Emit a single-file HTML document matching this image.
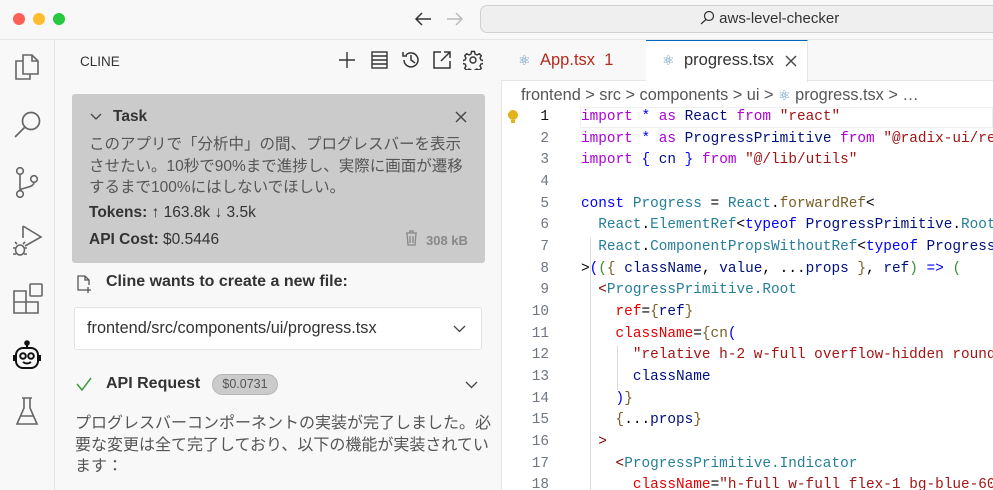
<!DOCTYPE html>
<html><head><meta charset="utf-8"><style>
*{margin:0;padding:0;box-sizing:border-box}
body{width:993px;height:490px;overflow:hidden;background:#f8f8f8;font-family:"Liberation Sans","Noto Sans CJK JP",sans-serif;color:#3b3b3b;position:relative}
.abs{position:absolute}
.title{left:0;top:0;width:993px;height:40px;background:#f8f8f8;border-bottom:1px solid #e5e5e5}
.dot{width:12px;height:12px;border-radius:50%;top:13px}
.search{left:480px;top:5px;width:530px;height:28px;border:1px solid #d0d0d0;border-radius:7px;background:#efefef;font-size:15px;line-height:26px;color:#333;padding-left:218px}
.act{left:0;top:40px;width:55px;height:450px;border-right:1px solid #e5e5e5}
.side{left:55px;top:40px;width:446px;height:450px}
.task{left:72px;top:94px;width:413px;height:169px;background:#cbcbcb;border-radius:3px}
.ed{left:501px;top:40px;width:492px;height:450px;background:#fff;border-left:1px solid #e5e5e5;overflow:hidden}
.tabs{left:501px;top:40px;width:492px;height:41px;background:#f8f8f8;border-bottom:1px solid #e5e5e5}
.code{font-family:"Liberation Mono",monospace;font-size:14.4px;white-space:pre;line-height:21.65px}
.kw{color:#af00db}.bl{color:#0000ff}.nv{color:#001080}.ty{color:#267f99}.st{color:#a31515}.fn{color:#795e26}.tg{color:#800000}.at{color:#e50000}
.ln{color:#6e7681;text-align:right;width:60px}
</style></head><body>
<div class="abs title"></div>
<div class="abs dot" style="left:13px;background:#fe5f57"></div>
<div class="abs dot" style="left:33px;background:#febc2e"></div>
<div class="abs dot" style="left:53px;background:#28c840"></div>
<svg class="abs" style="left:414px;top:11px" width="18" height="16" viewBox="0 0 18 16" fill="none" stroke="#333" stroke-width="1.5"><path d="M17 8H2M8 2L2 8l6 6"/></svg>
<svg class="abs" style="left:446px;top:11px" width="18" height="16" viewBox="0 0 18 16" fill="none" stroke="#bbb" stroke-width="1.5"><path d="M1 8h15M10 2l6 6-6 6"/></svg>
<div class="abs search"><svg width="16" height="16" viewBox="0 0 16 16" style="vertical-align:-3px"><circle cx="10" cy="6" r="4.5" fill="none" stroke="#333" stroke-width="1.2"/><path d="M7 9.5L2 14" stroke="#333" stroke-width="1.2"/></svg> aws-level-checker</div>

<div class="abs act">
<svg class="abs" style="left:13px;top:12px" width="28" height="30" viewBox="0 0 28 30" fill="none" stroke="#666" stroke-width="1.6"><path d="M10 3h9l6 6v13H10z"/><path d="M19 3v6h6"/><path d="M10 9H3v18h14v-5"/></svg>
<svg class="abs" style="left:13px;top:69px" width="30" height="30" viewBox="0 0 30 30" fill="none" stroke="#666" stroke-width="1.7"><circle cx="18" cy="12" r="8.5"/><path d="M12 18L2 28"/></svg>
<svg class="abs" style="left:14px;top:126px" width="26" height="34" viewBox="0 0 26 34" fill="none" stroke="#666" stroke-width="1.6"><circle cx="6" cy="5" r="3.3"/><circle cx="6" cy="28" r="3.3"/><circle cx="20" cy="13" r="3.3"/><path d="M6 8.3v16.4M20 16.3c0 6-14 5-14 8.4"/></svg>
<svg class="abs" style="left:11px;top:184px" width="32" height="34" viewBox="0 0 32 34" fill="none" stroke="#666" stroke-width="1.6"><path d="M12 2l18 11-16 9"/><path d="M12 2v12"/><ellipse cx="9" cy="26" rx="4.5" ry="5"/><path d="M2 24h3M13 24h3M2 30h3M13 30h3M6 20l-2-2M12 20l2-2"/></svg>
<svg class="abs" style="left:12px;top:243px" width="32" height="32" viewBox="0 0 32 32" fill="none" stroke="#666" stroke-width="1.6"><path d="M2 8h12v22H2zM2 19h24v11H14"/><rect x="18" y="1" width="12" height="12" rx="1"/></svg>
<svg class="abs" style="left:13px;top:300px" width="28" height="32" viewBox="0 0 28 32" fill="none" stroke="#111" stroke-width="2"><circle cx="14" cy="3" r="1.8" fill="#111"/><path d="M14 5v3"/><rect x="3" y="8" width="22" height="20" rx="7"/><circle cx="10" cy="16" r="2.8"/><circle cx="18" cy="16" r="2.8"/><path d="M10 22q4 3 8 0M1 15v6M27 15v6"/></svg>
<svg class="abs" style="left:15px;top:356px" width="24" height="32" viewBox="0 0 24 32" fill="none" stroke="#666" stroke-width="1.6"><path d="M7 2h10M9 2v10L2 28h20L15 12V2M5 20h14"/></svg>
</div>

<div class="abs side">
<div class="abs" style="left:25px;top:14px;font-size:13.5px;color:#333">CLINE</div>
<svg class="abs" style="left:284px;top:12px" width="16" height="16" viewBox="0 0 16 16" stroke="#333" stroke-width="1.4"><path d="M8 0v16M0 8h16"/></svg>
<svg class="abs" style="left:316px;top:11px" width="17" height="18" viewBox="0 0 17 18" fill="none" stroke="#333" stroke-width="1.4"><rect x="1" y="1" width="15" height="16"/><path d="M1 5h15M1 9h15M1 13h15"/></svg>
<svg class="abs" style="left:346px;top:10px" width="20" height="20" viewBox="0 0 20 20" fill="none" stroke="#333" stroke-width="1.5"><path d="M3 10a7 7 0 1 0 2-5M2 2v4h4"/><path d="M10 5v5l4 3"/></svg>
<svg class="abs" style="left:378px;top:11px" width="18" height="18" viewBox="0 0 18 18" fill="none" stroke="#333" stroke-width="1.5"><path d="M8 1H1v16h16v-7M11 1h6v6M17 1L8 10"/></svg>
<svg class="abs" style="left:408px;top:10px" width="20" height="20" viewBox="0 0 20 20" fill="none" stroke="#333" stroke-width="1.4"><circle cx="10" cy="10" r="3"/><path d="M8.5 1.5h3l.5 2.5 2 1 2.3-1.3 2 2-1.3 2.3 1 2 2.5.5v3l-2.5.5-1 2 1.3 2.3-2 2-2.3-1.3-2 1-.5 2.5h-3l-.5-2.5-2-1-2.3 1.3-2-2 1.3-2.3-1-2-2.5-.5v-3l2.5-.5 1-2-1.3-2.3 2-2 2.3 1.3 2-1z"/></svg>
</div>

<div class="abs task">
<svg class="abs" style="left:18px;top:19px" width="12" height="8" viewBox="0 0 12 8" fill="none" stroke="#444" stroke-width="1.3"><path d="M1 1l5 5 5-5"/></svg>
<div class="abs" style="left:41px;top:14px;font-size:15.5px;font-weight:bold;color:#333">Task</div>
<svg class="abs" style="left:383px;top:17px" width="12" height="12" viewBox="0 0 12 12" stroke="#444" stroke-width="1.4"><path d="M1 1l10 10M11 1L1 11"/></svg>
<div class="abs" style="left:17px;top:40px;width:400px;font-size:15.5px;line-height:21.5px;color:#555;white-space:nowrap">このアプリで「分析中」の間、プログレスバーを表示<br>させたい。10秒で90%まで進捗し、実際に画面が遷移<br>するまで100%にはしないでほしい。</div>
<div class="abs" style="left:17px;top:110px;font-size:15.5px;color:#333"><b>Tokens:</b> &#8593; 163.8k &#8595; 3.5k</div>
<div class="abs" style="left:17px;top:137px;font-size:15.5px;color:#333"><b>API Cost:</b> $0.5446</div>
<svg class="abs" style="left:333px;top:136px" width="13" height="16" viewBox="0 0 13 16" fill="none" stroke="#888" stroke-width="1.3"><path d="M1 3h11M5 3V1h3v2M2 3l1 12h7l1-12M5 6v7M8 6v7"/></svg>
<div class="abs" style="left:354px;top:139px;font-size:13px;font-weight:bold;color:#888">308 kB</div>
</div>

<svg class="abs" style="left:75px;top:274px" width="20" height="20" viewBox="0 0 20 20" fill="none" stroke="#555" stroke-width="1.3"><path d="M10 16H3V2h7l4 4v5M10 2v4h4M13 13v6M10 16h6"/></svg>
<div class="abs" style="left:106px;top:273px;font-size:16px;font-weight:bold;color:#333">Cline wants to create a new file:</div>
<div class="abs" style="left:74px;top:307px;width:408px;height:43px;background:#fff;border:1px solid #e3e3e3;border-radius:3px"></div>
<div class="abs" style="left:87px;top:319px;font-size:16.3px;color:#333">frontend/src/components/ui/progress.tsx</div>
<svg class="abs" style="left:453px;top:325px" width="13" height="8" viewBox="0 0 13 8" fill="none" stroke="#444" stroke-width="1.3"><path d="M1 1l5.5 5.5L12 1"/></svg>
<svg class="abs" style="left:76px;top:377px" width="16" height="14" viewBox="0 0 16 14" fill="none" stroke="#3a9a3a" stroke-width="1.5"><path d="M1 7l5 6L15 1"/></svg>
<div class="abs" style="left:106px;top:375px;font-size:16px;font-weight:bold;color:#333">API Request</div>
<div class="abs" style="left:212px;top:374px;width:66px;height:21px;background:#cbcbcb;border:1px solid #b5b5b5;border-radius:11px;font-size:12.5px;color:#555;text-align:center;line-height:19px">$0.0731</div>
<svg class="abs" style="left:465px;top:381px" width="13" height="8" viewBox="0 0 13 8" fill="none" stroke="#444" stroke-width="1.3"><path d="M1 1l5.5 5.5L12 1"/></svg>
<div class="abs" style="left:75px;top:413px;width:420px;font-size:16px;line-height:21.5px;color:#555;white-space:nowrap">プログレスバーコンポーネントの実装が完了しました。必<br>要な変更は全て完了しており、以下の機能が実装されてい<br>ます：</div>

<div class="abs ed"></div>
<div class="abs tabs"></div>
<div class="abs" style="left:646px;top:40px;width:162px;height:42px;background:#fff;border-top:1px solid #0066bf;border-right:1px solid #e5e5e5"></div>
<div class="abs" style="left:518px;top:52px;font-size:14px;color:#5a8fc0">&#9883;</div>
<div class="abs" style="left:540px;top:51px;font-size:16.5px;color:#b52a1d">App.tsx &nbsp;1</div>
<div class="abs" style="left:662px;top:52px;font-size:14px;color:#5a8fc0">&#9883;</div>
<div class="abs" style="left:684px;top:51px;font-size:16.5px;color:#333">progress.tsx</div>
<svg class="abs" style="left:785px;top:55px" width="12" height="12" viewBox="0 0 12 12" stroke="#444" stroke-width="1.4"><path d="M1 1l10 10M11 1L1 11"/></svg>
<div class="abs" style="left:521px;top:86px;font-size:16.3px;color:#555;white-space:nowrap">frontend &gt; src &gt; components &gt; ui &gt; <span style="color:#5a8fc0;font-size:14px">&#9883;</span> progress.tsx &gt; …</div>
<div class="abs" style="left:501px;top:82px;width:492px;height:408px;overflow:hidden">
<div class="abs" style="left:79px;top:25px;width:413px;height:21px;border:1px solid #eee"></div>
<svg class="abs" style="left:6px;top:27px" width="12" height="16" viewBox="0 0 12 16"><circle cx="6" cy="6" r="5" fill="#e2b21b"/><rect x="4" y="11" width="4" height="3" fill="#e2b21b"/></svg>
<div class="abs" style="left:89px;top:156px;width:1px;height:44px;background:#ddd"></div>
<div class="abs" style="left:89px;top:200px;width:1px;height:208px;background:#ddd"></div>
<div class="abs" style="left:116px;top:264px;width:1px;height:44px;background:#ddd"></div>
<div class="abs code ln" style="left:-12px;top:25px"><span style="color:#111">1</span>
2
3
4
5
6
7
8
9
10
11
12
13
14
15
16
17
18</div>
<div class="abs code" style="left:80px;top:25px;color:#000"><span class="kw">import</span> <span class="bl">*</span> <span class="kw">as</span> <span class="nv">React</span> <span class="kw">from</span> <span class="st">"react"</span>
<span class="kw">import</span> <span class="bl">*</span> <span class="kw">as</span> <span class="nv">ProgressPrimitive</span> <span class="kw">from</span> <span class="st">"@radix-ui/react-progress"</span>
<span class="kw">import</span> <span class="bl">{</span> <span class="nv">cn</span> <span class="bl">}</span> <span class="kw">from</span> <span class="st">"@/lib/utils"</span>

<span class="bl">const</span> <span class="ty">Progress</span> = <span class="ty">React</span>.<span class="fn">forwardRef</span>&lt;
  <span class="ty">React</span>.<span class="ty">ElementRef</span>&lt;<span class="bl">typeof</span> <span class="nv">ProgressPrimitive</span>.<span class="ty">Root</span>&gt;,
  <span class="ty">React</span>.<span class="ty">ComponentPropsWithoutRef</span>&lt;<span class="bl">typeof</span> <span class="nv">ProgressPrimitive</span>.<span class="ty">Root</span>&gt;
&gt;<span class="bl">(</span><span style="color:#319331">(</span><span class="fn">{</span> <span class="nv">className</span>, <span class="nv">value</span>, ...<span class="nv">props</span> <span class="fn">}</span>, <span class="nv">ref</span><span style="color:#319331">)</span> <span class="bl">=&gt;</span> <span style="color:#319331">(</span>
  <span class="tg">&lt;</span><span class="ty">ProgressPrimitive.Root</span>
    <span class="at">ref</span>=<span class="fn">{</span><span class="nv">ref</span><span class="fn">}</span>
    <span class="at">className</span>=<span class="fn">{cn</span><span class="bl">(</span>
      <span class="st">"relative h-2 w-full overflow-hidden rounded-full"</span>
      <span class="nv">className</span>
    <span class="bl">)</span><span class="fn">}</span>
    <span class="fn">{</span>...<span class="nv">props</span><span class="fn">}</span>
  <span class="tg">&gt;</span>
    <span class="tg">&lt;</span><span class="ty">ProgressPrimitive.Indicator</span>
      <span class="at">className</span>=<span class="st">"h-full w-full flex-1 bg-blue-600"</span></div>
</div>
</body></html>
